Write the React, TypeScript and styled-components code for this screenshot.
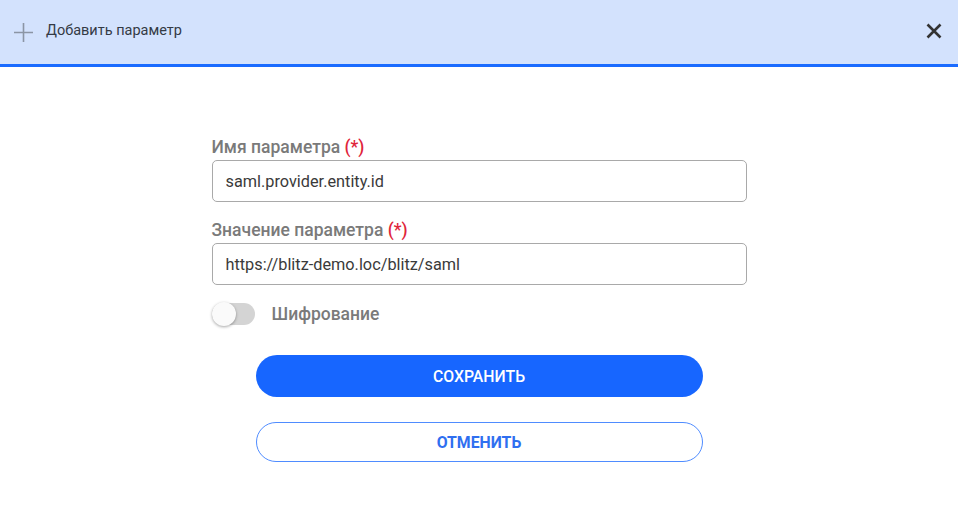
import React from 'react';
import styled, { createGlobalStyle } from 'styled-components';

const GlobalStyle = createGlobalStyle`
  html, body {
    margin: 0;
    padding: 0;
    background: #ffffff;
    font-family: Roboto, "Noto Sans", Arial, sans-serif;
  }
`;

const Page = styled.div`
  width: 958px;
  height: 511px;
  background: #ffffff;
  display: flex;
  flex-direction: column;
`;

const Header = styled.div`
  height: 64px;
  flex-shrink: 0;
  background: #d3e2fd;
  border-bottom: 3px solid #1a6bff;
  display: flex;
  align-items: center;
  padding: 0 16px 0 13px;
`;

const HeaderTitle = styled.div`
  flex: 1;
  margin-left: 12px;
  font-size: 14.5px;
  color: #333a45;
  margin-top: -3px;
`;

const IconButton = styled.button`
  border: none;
  background: none;
  padding: 0;
  display: flex;
  cursor: pointer;
  margin-top: -2px;
`;

const Form = styled.div`
  width: 535px;
  margin: 69px auto 0;
  display: flex;
  flex-direction: column;
`;

const Label = styled.div`
  font-size: 17.5px;
  font-weight: 500;
  color: #7a7a7a;
  margin-bottom: 2px;
  line-height: 22px;
`;

const Required = styled.span`
  color: #e0243a;
`;

const Field = styled.div`
  margin-bottom: 17px;
`;

const Input = styled.input`
  box-sizing: border-box;
  width: 100%;
  height: 42px;
  border: 1px solid #a9a9a9;
  border-radius: 5px;
  padding: 0 13px;
  font-family: Roboto, "Noto Sans", Arial, sans-serif;
  font-size: 16.3px;
  color: #3a3a3a;
  outline: none;
  background: #fff;
`;

const ToggleRow = styled.label`
  display: flex;
  align-items: center;
  gap: 17px;
  margin-top: 1px;
  font-size: 17.5px;
  font-weight: 500;
  color: #7a7a7a;
`;

const Track = styled.span`
  position: relative;
  width: 43px;
  height: 22px;
  border-radius: 11px;
  background: #d4d4d4;
  display: inline-block;
`;

const Knob = styled.span`
  position: absolute;
  left: 0;
  top: -1px;
  width: 24px;
  height: 24px;
  border-radius: 50%;
  background: #fafafa;
  box-shadow: 0 1px 3px rgba(0, 0, 0, 0.35);
`;

const Buttons = styled.div`
  display: flex;
  flex-direction: column;
  align-items: center;
  gap: 25px;
  margin-top: 30px;
`;

const Button = styled.button<{ $primary?: boolean }>`
  box-sizing: border-box;
  width: 447px;
  height: ${(p) => (p.$primary ? '42px' : '40px')};
  border-radius: 21px;
  font-family: Roboto, "Noto Sans", Arial, sans-serif;
  font-size: 15.8px;
  text-transform: uppercase;
  cursor: pointer;
  border: ${(p) => (p.$primary ? 'none' : '1.5px solid #4f8cff')};
  background: ${(p) => (p.$primary ? '#1766ff' : '#ffffff')};
  color: ${(p) => (p.$primary ? '#ffffff' : '#2f6ff0')};
  font-weight: ${(p) => (p.$primary ? 500 : 700)};
`;

export default function App() {
  return (
    <Page>
      <GlobalStyle />
      <Header>
        <svg width="21" height="21" viewBox="0 0 21 21">
          <path d="M10.5 1v19M1 10.5h19" stroke="#8b95a5" strokeWidth="1.6" />
        </svg>
        <HeaderTitle>Добавить параметр</HeaderTitle>
        <IconButton>
          <svg width="16" height="16" viewBox="0 0 16 16">
            <path d="M1.5 1.5l13 13M14.5 1.5l-13 13" stroke="#333" strokeWidth="2.6" />
          </svg>
        </IconButton>
      </Header>
      <Form>
        <Field>
          <Label>
            Имя параметра <Required>(*)</Required>
          </Label>
          <Input defaultValue="saml.provider.entity.id" />
        </Field>
        <Field>
          <Label>
            Значение параметра <Required>(*)</Required>
          </Label>
          <Input defaultValue="https://blitz-demo.loc/blitz/saml" />
        </Field>
        <ToggleRow>
          <Track>
            <Knob />
          </Track>
          Шифрование
        </ToggleRow>
        <Buttons>
          <Button $primary>Сохранить</Button>
          <Button>Отменить</Button>
        </Buttons>
      </Form>
    </Page>
  );
}
